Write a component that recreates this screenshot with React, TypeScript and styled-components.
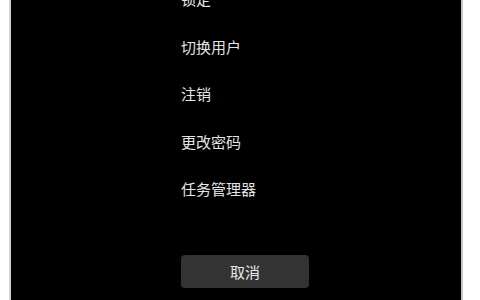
import styled, { createGlobalStyle } from "styled-components";

const GlobalStyle = createGlobalStyle`
  html, body {
    margin: 0;
    padding: 0;
    background: #ffffff;
    overflow: hidden;
  }
  body {
    font-family: "Noto Sans CJK SC", "Noto Sans", sans-serif;
  }
`;

const Screen = styled.div`
  width: 454px;
  height: 300px;
  margin-left: 9px;
  box-sizing: border-box;
  background: #000000;
  border-left: 2px solid #d4d4d4;
  border-right: 2px solid #c4c4c4;
  padding-left: 170px;
  overflow: hidden;
`;

const Menu = styled.ul`
  list-style: none;
  margin: -25px 0 0 0;
  padding: 0;
`;

const MenuItem = styled.li`
  height: 47.5px;
  line-height: 47.5px;
  font-size: 15px;
  color: #e4e4e4;
  white-space: nowrap;
`;

const CancelButton = styled.button`
  display: block;
  width: 128px;
  height: 33px;
  margin-top: 42px;
  border: 0;
  border-radius: 4px;
  background: #333333;
  color: #e8e8e8;
  font-family: "Noto Sans CJK SC", "Noto Sans", sans-serif;
  font-size: 15px;
  padding: 0;
`;

const items = ["锁定", "切换用户", "注销", "更改密码", "任务管理器"];

function App() {
  return (
    <>
      <GlobalStyle />
      <Screen>
        <Menu>
          {items.map((label) => (
            <MenuItem key={label}>{label}</MenuItem>
          ))}
        </Menu>
        <CancelButton type="button">取消</CancelButton>
      </Screen>
    </>
  );
}

export default App;
